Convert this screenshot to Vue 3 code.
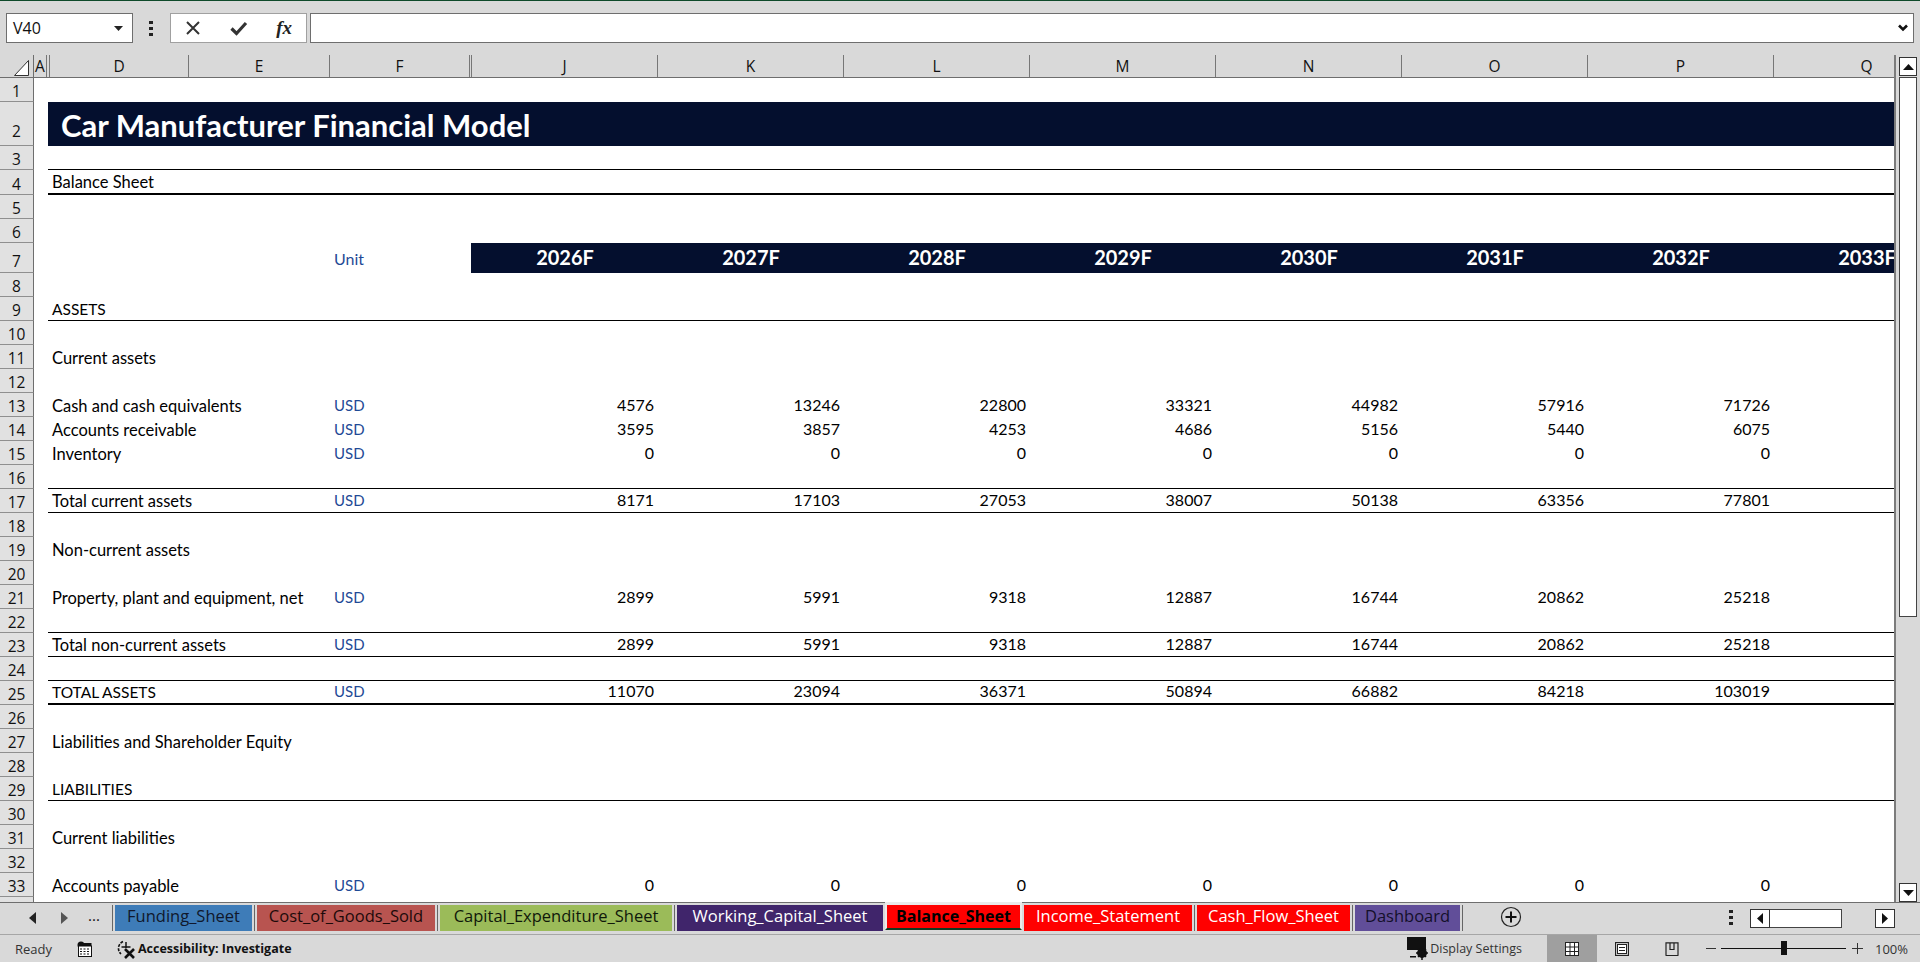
<script setup>
const columns = [
  { name: 'A', width: 13 },
  { name: '', width: 3 },
  { name: 'D', width: 139 },
  { name: 'E', width: 141 },
  { name: 'F', width: 140 },
  { name: '', width: 2 },
  { name: 'J', width: 186 },
  { name: 'K', width: 186 },
  { name: 'L', width: 186 },
  { name: 'M', width: 186 },
  { name: 'N', width: 186 },
  { name: 'O', width: 186 },
  { name: 'P', width: 186 },
  { name: 'Q', width: 186 },
]

const zeros = [0, 0, 0, 0, 0, 0, 0]

const rows = [
  { n: 1 },
  { n: 2, kind: 'title', label: 'Car Manufacturer Financial Model' },
  { n: 3, kind: 'line-bottom' },
  { n: 4, kind: 'thick-bottom', label: 'Balance Sheet' },
  { n: 5 },
  { n: 6 },
  { n: 7, kind: 'years', unit: 'Unit', values: ['2026F', '2027F', '2028F', '2029F', '2030F', '2031F', '2032F', '2033F'] },
  { n: 8 },
  { n: 9, kind: 'line-bottom caps', label: 'ASSETS' },
  { n: 10 },
  { n: 11, label: 'Current assets' },
  { n: 12 },
  { n: 13, label: 'Cash and cash equivalents', unit: 'USD', values: [4576, 13246, 22800, 33321, 44982, 57916, 71726] },
  { n: 14, label: 'Accounts receivable', unit: 'USD', values: [3595, 3857, 4253, 4686, 5156, 5440, 6075] },
  { n: 15, label: 'Inventory', unit: 'USD', values: zeros },
  { n: 16, kind: 'line-bottom' },
  { n: 17, kind: 'line-bottom', label: 'Total current assets', unit: 'USD', values: [8171, 17103, 27053, 38007, 50138, 63356, 77801] },
  { n: 18 },
  { n: 19, label: 'Non-current assets' },
  { n: 20 },
  { n: 21, label: 'Property, plant and equipment, net', unit: 'USD', values: [2899, 5991, 9318, 12887, 16744, 20862, 25218] },
  { n: 22, kind: 'line-bottom' },
  { n: 23, kind: 'line-bottom', label: 'Total non-current assets', unit: 'USD', values: [2899, 5991, 9318, 12887, 16744, 20862, 25218] },
  { n: 24, kind: 'line-bottom' },
  { n: 25, kind: 'thick-bottom caps', label: 'TOTAL ASSETS', unit: 'USD', values: [11070, 23094, 36371, 50894, 66882, 84218, 103019] },
  { n: 26 },
  { n: 27, label: 'Liabilities and Shareholder Equity' },
  { n: 28 },
  { n: 29, kind: 'line-bottom caps', label: 'LIABILITIES' },
  { n: 30 },
  { n: 31, label: 'Current liabilities' },
  { n: 32 },
  { n: 33, label: 'Accounts payable', unit: 'USD', values: zeros },
  { n: 34 },
]

const tabs = [
  { name: 'Funding_Sheet', width: 137, color: '#3e7cb8', text: '#10182c' },
  { name: 'Cost_of_Goods_Sold', width: 178, color: '#b85450', text: '#1c0a0a' },
  { name: 'Capital_Expenditure_Sheet', width: 232, color: '#9bbb59', text: '#10180a' },
  { name: 'Working_Capital_Sheet', width: 206, color: '#40256b', text: '#ffffff' },
  { name: 'Balance_Sheet', width: 137, color: '#ff0000', text: '#000000', active: true, noSep: true },
  { name: 'Income_Statement', width: 168, color: '#ff0000', text: '#ffffff', noSep: true },
  { name: 'Cash_Flow_Sheet', width: 153, color: '#ff0000', text: '#ffffff' },
  { name: 'Dashboard', width: 105, color: '#614e99', text: '#14102a' },
]
</script>

<template>
  <div class="excel">
    <div class="formula-bar">
      <div class="name-box">
        <span>V40</span>
        <svg width="9" height="5" viewBox="0 0 9 5"><path d="M0 0h9L4.500 5z" fill="#222" /></svg>
      </div>
      <div class="dots"><i></i><i></i><i></i></div>
      <div class="fx-box">
        <svg width="16" height="16" viewBox="0 0 16 16"><path d="M2 2l12 12M14 2L2 14" stroke="#333" stroke-width="2" fill="none" /></svg>
        <svg width="18" height="16" viewBox="0 0 18 16"><path d="M1.500 8.500l5 5L16 3" stroke="#333" stroke-width="3.200" fill="none" /></svg>
        <span class="fx">fx</span>
      </div>
      <div class="formula-input">
        <svg width="10" height="8" viewBox="0 0 10 8"><path d="M1 1.500l4 4 4-4" stroke="#111" stroke-width="2.600" fill="none" /></svg>
      </div>
    </div>

    <div class="sheet-wrap">
      <div class="sheet">
        <div class="col-headers">
          <div class="corner">
            <svg width="15" height="16" viewBox="0 0 15 16"><path d="M14.500.5v15H.5z" fill="#fff" stroke="#333" /></svg>
          </div>
          <div
            v-for="(col, i) in columns"
            :key="i"
            class="col-head"
            :style="{ width: col.width + 'px' }"
          >
            {{ col.name }}
          </div>
        </div>

        <div v-for="row in rows" :key="row.n" class="row" :class="'r' + row.n">
          <div class="row-head">{{ row.n }}</div>
          <div class="row-body" :class="row.kind">
            <div class="pad"></div>
            <div class="label">{{ row.label }}</div>
            <div class="col-e"></div>
            <div class="unit">{{ row.unit }}</div>
            <div class="gap"></div>
            <div v-for="(v, i) in row.values" :key="i" class="num">{{ v }}</div>
          </div>
        </div>
      </div>

      <div class="v-scroll">
        <div class="v-btn">
          <svg width="11" height="6" viewBox="0 0 11 6"><path d="M0 6L5.500 0 11 6z" fill="#111" /></svg>
        </div>
        <div class="v-thumb"></div>
        <div class="v-track"></div>
        <div class="v-btn">
          <svg width="11" height="6" viewBox="0 0 11 6"><path d="M0 0L5.500 6 11 0z" fill="#111" /></svg>
        </div>
      </div>
    </div>

    <div class="tab-bar">
      <div class="tab-nav">
        <svg width="7" height="12" viewBox="0 0 7 12"><path d="M7 0v12L0 6z" fill="#222" /></svg>
        <svg width="7" height="12" viewBox="0 0 7 12"><path d="M0 0v12l7-6z" fill="#555" /></svg>
        <span class="more">...</span>
      </div>
      <div class="tabs">
        <template v-for="tab in tabs" :key="tab.name">
          <i class="tab-sep" :class="{ none: tab.noSep }"></i>
          <div
            class="tab"
            :class="{ active: tab.active }"
            :style="{ width: tab.width + 'px', background: tab.color, color: tab.text }"
          >
            {{ tab.name }}
          </div>
        </template>
        <i class="tab-sep"></i>
      </div>
      <svg class="add-sheet" width="22" height="22" viewBox="0 0 22 22">
        <circle cx="11" cy="11" r="9.500" fill="none" stroke="#222" stroke-width="1.200" />
        <path d="M11 5.500v11M5.500 11h11" stroke="#111" stroke-width="2" />
      </svg>
      <div class="dots tab-dots"><i></i><i></i><i></i></div>
      <div class="h-scroll">
        <div class="h-btn">
          <svg width="6" height="11" viewBox="0 0 6 11"><path d="M6 0v11L0 5.500z" fill="#111" /></svg>
        </div>
        <div class="h-thumb"></div>
        <div class="h-track"></div>
        <div class="h-btn">
          <svg width="6" height="11" viewBox="0 0 6 11"><path d="M0 0v11l6-5.500z" fill="#111" /></svg>
        </div>
      </div>
    </div>

    <div class="status-bar">
      <span class="ready">Ready</span>
      <svg class="macro" width="15" height="16" viewBox="0 0 15 16">
        <circle cx="4" cy="4" r="3.500" fill="#111" />
        <rect x="2" y="2" width="12.500" height="3" fill="#111" />
        <rect x="1.500" y="5" width="13" height="10.500" fill="#fff" stroke="#111" />
        <path d="M3 8h2M6.500 8h2M10 8h2M3 10.500h2M6.500 10.500h2M10 10.500h2M3 13h2M6.500 13h2M10 13h2" stroke="#111" stroke-width="1.200" />
      </svg>
      <svg class="a11y" width="20" height="20" viewBox="0 0 20 20">
        <path d="M7 2.500A7.500 7.500 0 0 0 5 15" fill="none" stroke="#111" stroke-width="1.600" stroke-dasharray="3 1.200" />
        <path d="M10 3v6M5.500 8h9" stroke="#111" stroke-width="1.500" fill="none" />
        <path d="M9 10l9 9M18 10l-9 9" stroke="#111" stroke-width="2.600" fill="none" />
      </svg>
      <span class="a11y-text">Accessibility: Investigate</span>
      <div class="status-right">
        <svg class="display" width="22" height="24" viewBox="0 0 22 24">
          <rect x="0" y="0" width="19" height="13" fill="#111" />
          <path d="M3 19h6v1.500H3z" fill="#111" />
          <circle cx="15" cy="16" r="5" fill="#111" />
          <circle cx="15" cy="16" r="1.800" fill="#d9d9d9" />
          <path d="M15 9v14M9 16h12M11 12l8 8M19 12l-8 8" stroke="#111" stroke-width="1.500" />
        </svg>
        <span class="display-text">Display Settings</span>
        <div class="view active">
          <svg width="14" height="14" viewBox="0 0 14 14">
            <rect x=".5" y=".5" width="13" height="13" fill="#fff" stroke="#222" />
            <path d="M.5 5h13M.5 9.500h13M5 .5v13M9.500 .5v13" stroke="#222" />
          </svg>
        </div>
        <div class="view">
          <svg width="14" height="14" viewBox="0 0 14 14">
            <rect x=".5" y=".5" width="13" height="13" fill="none" stroke="#222" stroke-width="1.200" />
            <rect x="2.500" y="2.500" width="9" height="9" fill="#fff" stroke="#222" />
            <path d="M4 5.500h6M4 8.500h6" stroke="#222" />
          </svg>
        </div>
        <div class="view">
          <svg width="14" height="14" viewBox="0 0 14 14">
            <path d="M.5 13.500h13M1 13V.8h12V13" fill="none" stroke="#222" stroke-width="1.200" />
            <path d="M5 1v6.500h4V1" fill="none" stroke="#222" stroke-width="1.200" />
          </svg>
        </div>
        <div class="zoom">
          <i class="minus"></i>
          <div class="slider"><i class="knob"></i></div>
          <svg width="11" height="11" viewBox="0 0 11 11"><path d="M5.500 0v11M0 5.500h11" stroke="#333" /></svg>
        </div>
        <span class="pct">100%</span>
      </div>
    </div>
  </div>
</template>

<style>
html,
body {
  margin: 0;
  overflow: hidden;
}
</style>

<style scoped>
.excel {
  width: 1920px;
  height: 962px;
  display: flex;
  flex-direction: column;
  background: #d9d9d9;
  border-top: 1px solid #0e4a2a;
  box-sizing: border-box;
  font-family: 'Open Sans', sans-serif;
  color: #111;
  overflow: hidden;
}

.formula-bar {
  height: 54px;
  flex-shrink: 0;
  display: flex;
  align-items: flex-start;
  padding: 12px 6px 0 6px;
  box-sizing: border-box;
}

.name-box {
  width: 127px;
  height: 30px;
  box-sizing: border-box;
  background: #fff;
  border: 1px solid #6e6e6e;
  display: flex;
  align-items: center;
  justify-content: space-between;
  padding: 0 9px 0 6px;
  font-size: 16px;
}

.dots {
  display: flex;
  flex-direction: column;
  gap: 3px;
  width: 4px;
  margin: 8px 17px 0 16px;
}

.dots i {
  width: 4px;
  height: 3px;
  background: #222;
}

.fx-box {
  width: 137px;
  height: 30px;
  box-sizing: border-box;
  background: #fff;
  border: 1px solid #a0a0a0;
  display: flex;
  align-items: center;
  justify-content: space-between;
  padding: 0 14px 0 14px;
}

.fx {
  font-family: 'Liberation Serif', serif;
  font-style: italic;
  font-weight: 700;
  font-size: 19px;
  color: #222;
}

.formula-input {
  flex: 1;
  margin-left: 3px;
  height: 30px;
  box-sizing: border-box;
  background: #fff;
  border: 1px solid #6e6e6e;
  display: flex;
  align-items: center;
  justify-content: flex-end;
  padding-right: 5px;
}

.sheet-wrap {
  flex: 1;
  display: flex;
  min-height: 0;
  border-bottom: 1px solid #6e6e6e;
}

.sheet {
  width: 1896px;
  overflow: hidden;
  border-right: 2px solid #7c7c7c;
  box-sizing: border-box;
  background: #fff;
}

.col-headers {
  display: flex;
  height: 23px;
  box-sizing: border-box;
  background: #d9d9d9;
  border-bottom: 1px solid #6e6e6e;
  width: 2000px;
}

.corner {
  width: 34px;
  flex-shrink: 0;
  box-sizing: border-box;
  border-right: 1px solid #6e6e6e;
  padding: 5px 0 0 14px;
}

.corner svg {
  display: block;
}

.col-head {
  flex-shrink: 0;
  box-sizing: border-box;
  border-right: 1px solid #777;
  text-align: center;
  font-size: 15.500px;
  line-height: 23px;
  overflow: hidden;
}

.row {
  display: flex;
  height: 24px;
  width: 2000px;
}

.r2 {
  height: 44px;
}

.r4 {
  height: 25px;
}

.r7 {
  height: 30px;
}

.row-head {
  width: 34px;
  flex-shrink: 0;
  box-sizing: border-box;
  background: #e1e1e1;
  border-right: 1px solid #6e6e6e;
  border-bottom: 1px solid #8f8f8f;
  text-align: center;
  font-size: 15.500px;
  display: flex;
  align-items: flex-end;
  justify-content: center;
  padding-bottom: 0;
  line-height: 20px;
}

.r2 .row-head {
  padding-bottom: 4px;
}

.r7 .row-head {
  padding-bottom: 1px;
}

.row-body {
  margin-left: 14px;
  flex: 1;
  box-sizing: border-box;
  display: grid;
  grid-template-columns: 2px 139px 141px 141px 1px repeat(8, 186px);
  align-items: end;
  font-family: Lato, sans-serif;
  font-size: 16.500px;
  line-height: 20px;
  color: #000;
}

.row-body > div {
  white-space: nowrap;
  padding-bottom: 1px;
}

.row-body > .unit,
.row-body > .num {
  padding-bottom: 2px;
}

.row-body.caps .label {
  font-size: 15.500px;
}

.line-bottom {
  border-bottom: 1px solid #000;
}

.thick-bottom {
  border-bottom: 2px solid #000;
}

.label {
  padding-left: 2px;
}

.unit {
  padding-left: 4px;
  color: #1f4a96;
  font-size: 15px;
}

.num {
  text-align: right;
  padding-right: 4px;
  font-size: 16px;
}

.row-body.title {
  background: #040f2e;
  color: #fff;
  align-items: center;
}

.row-body.title .label {
  padding-left: 11px;
  font-size: 31px;
  font-weight: 700;
  line-height: 36px;
  padding-bottom: 0;
  position: relative;
  top: 1px;
}

.row-body.years .gap,
.row-body.years .num {
  background: #040f2e;
  height: 100%;
  padding-bottom: 0;
}

.row-body.years .num {
  color: #fff;
  text-align: center;
  padding-right: 0;
  font-size: 20px;
  font-weight: 700;
  line-height: 29px;
}

.row-body.years .unit {
  padding-bottom: 4px;
  font-size: 16px;
}

.v-scroll {
  width: 24px;
  flex-shrink: 0;
  box-sizing: border-box;
  padding: 2px 3px 0 3px;
  display: flex;
  flex-direction: column;
}

.v-btn {
  height: 19px;
  box-sizing: border-box;
  background: #fff;
  border: 1px solid #333;
  display: flex;
  align-items: center;
  justify-content: center;
  flex-shrink: 0;
}

.v-thumb {
  height: 540px;
  box-sizing: border-box;
  background: #fff;
  border: 1px solid #444;
  margin-top: 1px;
}

.v-track {
  flex: 1;
}

.tab-bar {
  height: 31px;
  flex-shrink: 0;
  display: flex;
  align-items: flex-start;
  border-bottom: 1px solid #a6a6a6;
}

.tab-nav {
  width: 110px;
  flex-shrink: 0;
  height: 26px;
  margin-top: 2px;
  box-sizing: border-box;
  display: flex;
  align-items: center;
  padding-left: 29px;
}

.tab-nav svg + svg {
  margin-left: 25px;
}

.more {
  margin-left: 20px;
  font-size: 15px;
  line-height: 15px;
  margin-top: -6px;
}

.tabs {
  display: flex;
  align-items: flex-start;
}

.tab-sep {
  width: 1px;
  height: 26px;
  margin: 2px 2px 0 2px;
  background: #666;
  flex-shrink: 0;
}

.tab-sep.none {
  width: 0;
  margin: 0 1px 0 1px;
}

.tab {
  height: 26px;
  margin-top: 2px;
  box-sizing: border-box;
  text-align: center;
  font-size: 16.500px;
  line-height: 22px;
  flex-shrink: 0;
  white-space: nowrap;
}

.tab.active {
  height: 28px;
  margin-top: -1px;
  font-weight: 700;
  font-size: 16px;
  line-height: 22px;
  border-left: 2px solid #eaeaea;
  border-right: 2px solid #eaeaea;
  border-top: 3px solid #eaeaea;
  border-bottom: 2px solid #0e3a20;
}

.add-sheet {
  margin: 3px 0 0 35px;
}

.tab-dots {
  margin: 7px 17px 0 207px;
}

.h-scroll {
  display: flex;
  margin: 6px 0 0 0;
  height: 19px;
  width: 145px;
}

.h-btn {
  width: 20px;
  box-sizing: border-box;
  background: #fff;
  border: 1px solid #333;
  display: flex;
  align-items: center;
  justify-content: center;
  flex-shrink: 0;
}

.h-thumb {
  width: 72px;
  box-sizing: border-box;
  background: #fff;
  border: 1px solid #444;
  border-left: none;
}

.h-track {
  flex: 1;
}

.status-bar {
  height: 27px;
  flex-shrink: 0;
  display: flex;
  align-items: center;
  font-size: 13px;
  color: #333;
}

.ready {
  margin-left: 15px;
  width: 62px;
}

.macro {
  margin-right: 24px;
}

.a11y {
  margin-right: 2px;
}

.a11y-text {
  font-weight: 700;
  color: #111;
  font-size: 12.500px;
}

.status-right {
  margin-left: auto;
  display: flex;
  align-items: center;
  height: 100%;
}

.display {
  margin-right: 1px;
}

.display-text {
  margin-right: 25px;
  font-size: 12.500px;
}

.view {
  width: 50px;
  height: 100%;
  display: flex;
  align-items: center;
  justify-content: center;
}

.view.active {
  background: #9f9f9f;
}

.zoom {
  display: flex;
  align-items: center;
  margin-left: 9px;
}

.minus {
  width: 10px;
  height: 1px;
  background: #333;
}

.slider {
  width: 125px;
  height: 1px;
  background: #111;
  margin: 0 6px 0 5px;
  position: relative;
}

.knob {
  position: absolute;
  left: 60px;
  top: -7px;
  width: 6px;
  height: 14px;
  background: #111;
}

.pct {
  margin: 0 12px 0 12px;
}
</style>
